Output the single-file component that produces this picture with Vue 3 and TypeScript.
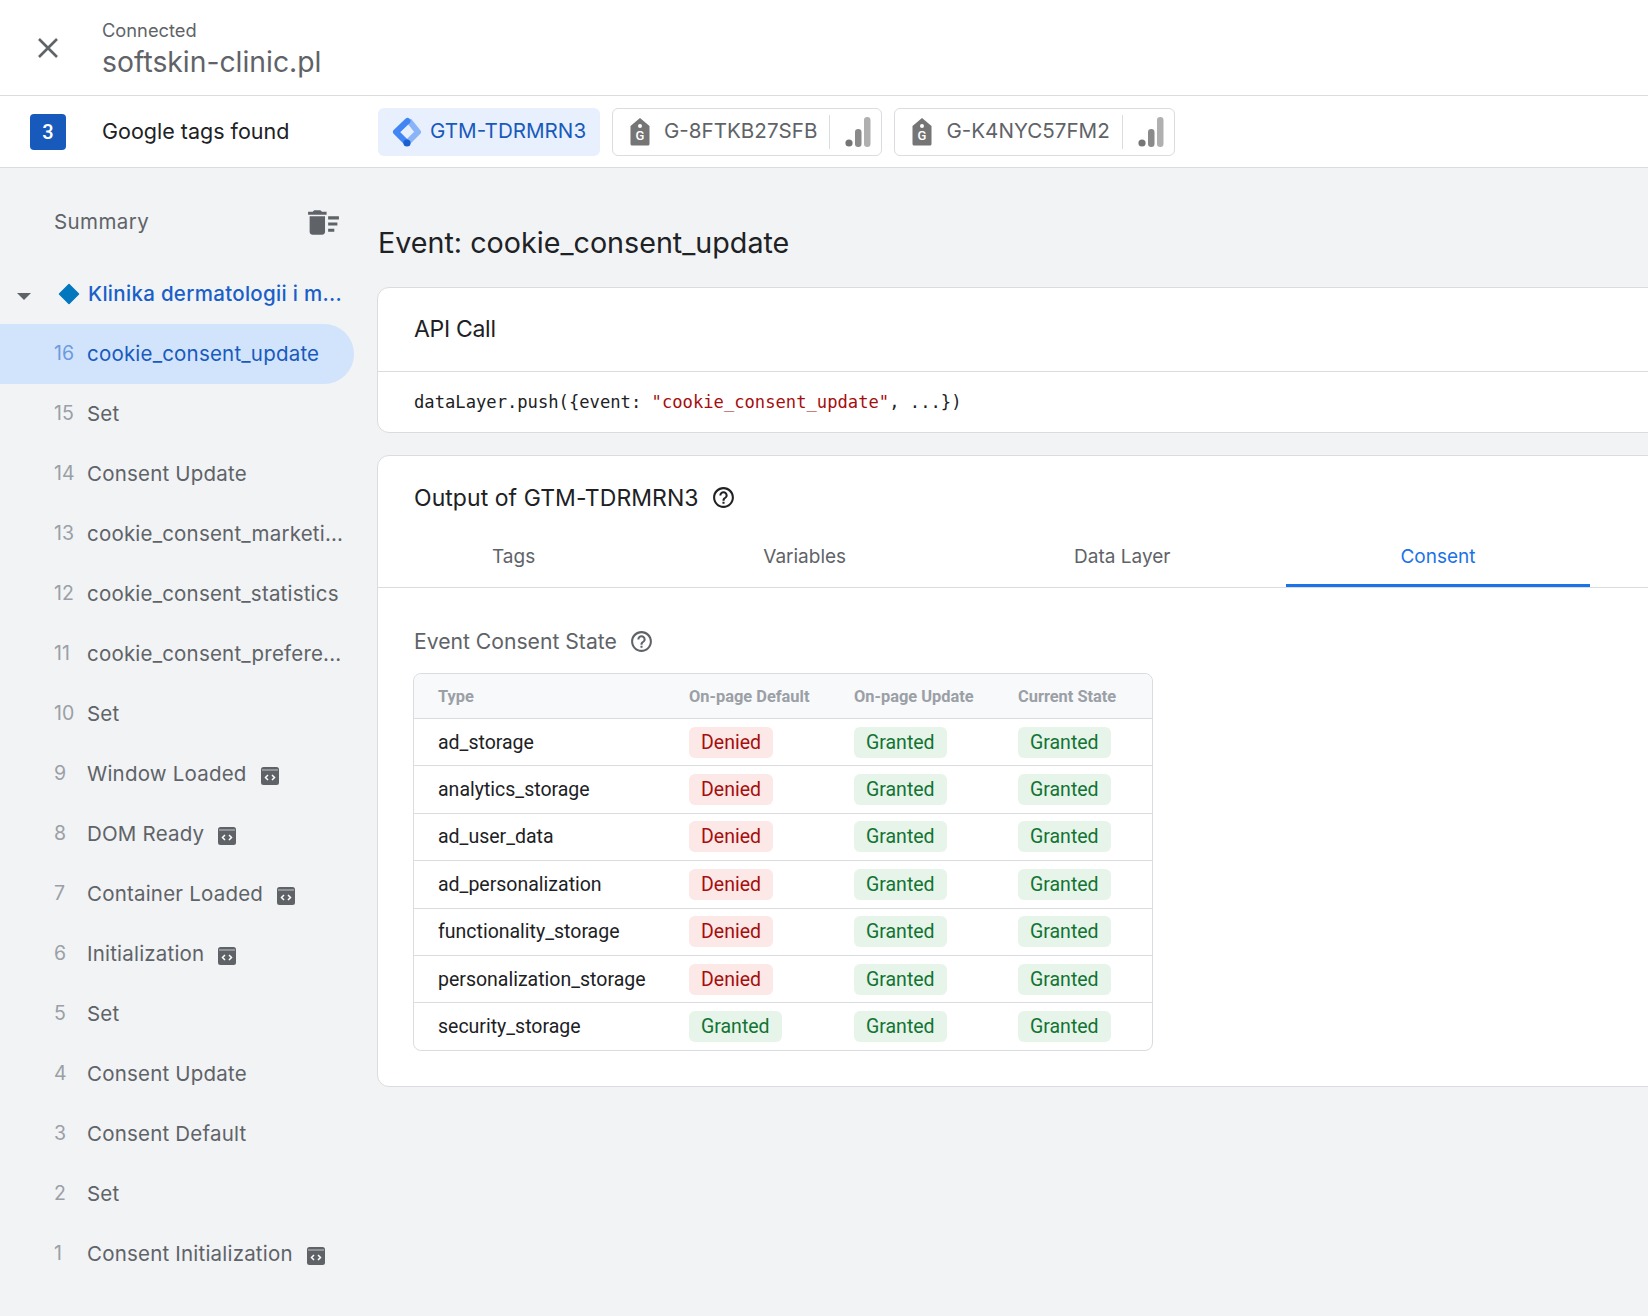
<script setup lang="ts">
interface EventRow {
  num: number;
  name: string;
  selected?: boolean;
  code?: boolean;
}

const events: EventRow[] = [
  { num: 16, name: "cookie_consent_update", selected: true },
  { num: 15, name: "Set" },
  { num: 14, name: "Consent Update" },
  { num: 13, name: "cookie_consent_marketi..." },
  { num: 12, name: "cookie_consent_statistics" },
  { num: 11, name: "cookie_consent_prefere..." },
  { num: 10, name: "Set" },
  { num: 9, name: "Window Loaded", code: true },
  { num: 8, name: "DOM Ready", code: true },
  { num: 7, name: "Container Loaded", code: true },
  { num: 6, name: "Initialization", code: true },
  { num: 5, name: "Set" },
  { num: 4, name: "Consent Update" },
  { num: 3, name: "Consent Default" },
  { num: 2, name: "Set" },
  { num: 1, name: "Consent Initialization", code: true },
];

const tags = ["G-8FTKB27SFB", "G-K4NYC57FM2"];
const tabs = ["Tags", "Variables", "Data Layer", "Consent"];

const consent = [
  { type: "ad_storage", def: "Denied" },
  { type: "analytics_storage", def: "Denied" },
  { type: "ad_user_data", def: "Denied" },
  { type: "ad_personalization", def: "Denied" },
  { type: "functionality_storage", def: "Denied" },
  { type: "personalization_storage", def: "Denied" },
  { type: "security_storage", def: "Granted" },
];

const helpPath =
  "M11 18h2v-2h-2v2zm1-16C6.48 2 2 6.48 2 12s4.48 10 10 10 10-4.48 10-10S17.52 2 12 2zm0 18c-4.41 0-8-3.59-8-8s3.59-8 8-8 8 3.59 8 8-3.59 8-8 8zm0-14c-2.21 0-4 1.79-4 4h2c0-1.1.9-2 2-2s2 .9 2 2c0 2-3 1.75-3 5h2c0-2.25 3-2.5 3-5 0-2.21-1.79-4-4-4z";
</script>

<template>
  <div class="page">
    <header class="top">
      <svg class="close" viewBox="0 0 22 22" width="22" height="22">
        <path d="M2 2l18 18M20 2L2 20" stroke="#5f6368" stroke-width="2.6" fill="none" />
      </svg>
      <div class="site">
        <div class="status">Connected</div>
        <div class="domain">softskin-clinic.pl</div>
      </div>
    </header>

    <div class="tagbar">
      <div class="count">3</div>
      <div class="found">Google tags found</div>
      <div class="chip chip-active">
        <svg viewBox="0 0 30 30" width="30" height="30">
          <path d="M18 5L26 15L16 25" stroke="#8ab4f8" stroke-width="6" fill="none" stroke-linecap="round" stroke-linejoin="round" />
          <path d="M15.5 4L4 15L14.5 25.5" stroke="#4285f4" stroke-width="6" fill="none" stroke-linecap="round" stroke-linejoin="round" />
          <circle cx="15" cy="26" r="3.6" fill="#1a5fd0" />
        </svg>
        <span class="chip-text">GTM-TDRMRN3</span>
      </div>
      <div v-for="t in tags" :key="t" class="chip chip-tag">
        <svg viewBox="0 0 20 28" width="20" height="28">
          <path d="M10 0L19.5 8V26a1.5 1.5 0 0 1-1.5 1.5H2A1.5 1.5 0 0 1 .5 26V8z" fill="#757575" />
          <circle cx="10" cy="8" r="2" fill="#fff" />
          <text x="10" y="22" text-anchor="middle" class="tag-g">G</text>
        </svg>
        <span class="chip-label">{{ t }}</span>
        <span class="chip-sep"></span>
        <svg viewBox="0 0 26 30" width="26" height="30">
          <circle cx="4" cy="26" r="3.6" fill="#757575" />
          <rect x="10" y="12" width="6.5" height="18" rx="3.2" fill="#8a8a8a" />
          <rect x="19" y="0" width="6.5" height="30" rx="3.2" fill="#b0b0b0" />
        </svg>
      </div>
    </div>

    <div class="body">
      <aside class="side">
        <div class="summary">
          <span>Summary</span>
          <svg viewBox="0 0 24 24" width="37" height="37">
            <path fill="#5f6368" d="M15 16h4v2h-4zm0-8h7v2h-7zm0 4h6v2h-6zM3 18c0 1.1.9 2 2 2h6c1.1 0 2-.9 2-2V8H3v10zM14 5h-3l-1-1H6L5 5H2v2h12z" />
          </svg>
        </div>
        <div class="container-row">
          <span class="caret"></span>
          <svg class="diamond" viewBox="0 0 22 22" width="22" height="22">
            <path d="M11 1.5L20.5 11L11 20.5L1.5 11z" fill="#0277bd" stroke="#0277bd" stroke-width="1.5" stroke-linejoin="round" />
          </svg>
          <span class="container-name">Klinika dermatologii i m...</span>
        </div>
        <div v-for="e in events" :key="e.num" class="ev" :class="{ 'ev-sel': e.selected }">
          <span class="ev-num">{{ e.num }}</span>
          <span class="ev-name">{{ e.name }}</span>
          <svg v-if="e.code" class="ev-code" viewBox="0 0 18 18" width="18" height="18">
            <rect x="0" y="0" width="18" height="18" rx="2.5" fill="#5f6368" />
            <path d="M1 3h16" stroke="#c4c6c9" stroke-width="1" />
            <path d="M7 8l-2.5 2.5L7 13M11 8l2.5 2.5L11 13" stroke="#fff" stroke-width="1.5" fill="none" />
          </svg>
        </div>
      </aside>

      <main class="main">
        <h1 class="title">Event: cookie_consent_update</h1>

        <section class="card">
          <div class="api-head">API Call</div>
          <div class="api-code">dataLayer.push({event: <span class="str">"cookie_consent_update"</span>, ...})</div>
        </section>

        <section class="card output">
          <div class="out-head">
            <span>Output of GTM-TDRMRN3</span>
            <svg viewBox="0 0 24 24" width="25" height="25"><path :d="helpPath" fill="#202124" /></svg>
          </div>
          <div class="tabs">
            <div v-for="t in tabs" :key="t" class="tab" :class="{ 'tab-on': t === 'Consent' }">{{ t }}</div>
          </div>
          <div class="state-head">
            <span>Event Consent State</span>
            <svg viewBox="0 0 24 24" width="25" height="25"><path :d="helpPath" fill="#5f6368" /></svg>
          </div>
          <table class="grid">
            <thead>
              <tr>
                <th class="c1">Type</th>
                <th class="c2">On-page Default</th>
                <th class="c3">On-page Update</th>
                <th class="c4">Current State</th>
              </tr>
            </thead>
            <tbody>
              <tr v-for="r in consent" :key="r.type">
                <td>{{ r.type }}</td>
                <td><span class="pill" :class="r.def === 'Denied' ? 'no' : 'yes'">{{ r.def }}</span></td>
                <td><span class="pill yes">Granted</span></td>
                <td><span class="pill yes">Granted</span></td>
              </tr>
            </tbody>
          </table>
        </section>
      </main>
    </div>
  </div>
</template>

<style>
html,
body {
  margin: 0;
  background: #f1f3f5;
  overflow: hidden;
}
</style>

<style scoped>
.page {
  width: 1648px;
  height: 1316px;
  overflow: hidden;
  display: flex;
  flex-direction: column;
  font-family: Inter, "Noto Sans", sans-serif;
  color: #5f6368;
  background: #f1f3f5;
}

.top {
  height: 96px;
  box-sizing: border-box;
  background: #fff;
  border-bottom: 1px solid #dadce0;
  display: flex;
  align-items: center;
  padding-left: 37px;
}
.site {
  margin-left: 43px;
  margin-top: 3px;
}
.status {
  font-size: 18.3px;
  line-height: 24px;
}
.domain {
  margin-top: 2px;
  font-size: 28.3px;
  line-height: 36px;
}

.tagbar {
  height: 72px;
  box-sizing: border-box;
  background: #fff;
  border-bottom: 1px solid #dadce0;
  display: flex;
  align-items: center;
  padding-left: 30px;
}
.count {
  width: 36px;
  height: 36px;
  border-radius: 4px;
  background: #185abc;
  color: #fff;
  font: 500 20px/36px Roboto, sans-serif;
  text-align: center;
}
.found {
  width: 276px;
  margin-left: 36px;
  padding-bottom: 2px;
  font-size: 21.5px;
  color: #202124;
}
.chip {
  height: 48px;
  box-sizing: border-box;
  border-radius: 6px;
  display: flex;
  align-items: center;
  margin-right: 12px;
  font-size: 20.6px;
}
.chip-active {
  width: 222px;
  background: #e8f0fe;
  padding-left: 14px;
  color: #185abc;
}
.chip-text {
  margin-left: 8px;
  padding-bottom: 2px;
}
.chip-tag {
  border: 1px solid #dadce0;
  padding: 0 10px 0 17px;
}
.chip-label {
  margin-left: 14px;
  padding-bottom: 2px;
  white-space: nowrap;
}
.chip-sep {
  width: 1px;
  height: 34px;
  background: #dadce0;
  margin: 0 15px 0 12px;
}
.tag-g {
  font: 500 13px Roboto, sans-serif;
  fill: #fff;
}

.body {
  flex: 1;
  display: flex;
  min-height: 0;
}

.side {
  width: 354px;
  flex: none;
  padding-top: 24px;
  box-sizing: border-box;
}
.summary {
  height: 60px;
  box-sizing: border-box;
  margin-bottom: 12px;
  padding: 0 12px 0 54px;
  display: flex;
  align-items: center;
  justify-content: space-between;
  font-size: 20.5px;
  letter-spacing: 0.4px;
}
.summary span {
  padding-bottom: 2px;
}
.container-row {
  height: 60px;
  box-sizing: border-box;
  display: flex;
  align-items: center;
  padding-left: 17px;
  font-weight: 500;
  font-size: 20.5px;
  letter-spacing: 0.3px;
  color: #1a5fc9;
}
.caret {
  width: 0;
  height: 0;
  border-left: 7px solid transparent;
  border-right: 7px solid transparent;
  border-top: 7px solid #5f6368;
  margin-top: 4px;
}
.diamond {
  margin-left: 27px;
  flex: none;
}
.container-name {
  margin-left: 8px;
  padding-bottom: 2px;
  white-space: nowrap;
}
.ev {
  height: 60px;
  box-sizing: border-box;
  padding: 0 0 2px 54px;
  display: flex;
  align-items: center;
  font-size: 20.5px;
  letter-spacing: 0.2px;
}
.ev-sel {
  background: #d2e3fc;
  border-radius: 0 30px 30px 0;
  color: #185abc;
}
.ev-num {
  width: 33px;
  flex: none;
  color: #9aa0a6;
  font-size: 19.5px;
  letter-spacing: 0;
}
.ev-sel .ev-num {
  color: #6c9be0;
}
.ev-name {
  white-space: nowrap;
}
.ev-code {
  margin-left: 14px;
  margin-top: 5px;
  flex: none;
}

.main {
  flex: 1;
  min-width: 0;
  overflow: hidden;
  padding-left: 23px;
}
.title {
  margin: 0;
  height: 119px;
  box-sizing: border-box;
  padding: 56px 0 0 1px;
  font-size: 28.7px;
  line-height: 38px;
  font-weight: 400;
  color: #202124;
}
.card {
  width: 1400px;
  box-sizing: border-box;
  background: #fff;
  border: 1px solid #dadce0;
  border-radius: 12px;
}
.api-head {
  height: 84px;
  box-sizing: border-box;
  padding-left: 36px;
  border-bottom: 1px solid #dadce0;
  font-size: 23px;
  line-height: 82px;
  color: #202124;
  letter-spacing: -0.3px;
}
.api-code {
  height: 60px;
  padding-left: 36px;
  font: 17.17px/60px "DejaVu Sans Mono", monospace;
  color: #202124;
}
.str {
  color: #a50e0e;
}
.output {
  margin-top: 22px;
  height: 632px;
}
.out-head {
  height: 84px;
  box-sizing: border-box;
  padding: 0 0 1px 36px;
  display: flex;
  align-items: center;
  gap: 12px;
  font-size: 23px;
  letter-spacing: 0.05px;
  color: #202124;
}
.tabs {
  height: 47px;
  display: flex;
  border-bottom: 1px solid #dadce0;
}
.tab {
  padding: 0 114px;
  font-size: 19px;
  line-height: 34px;
  box-sizing: border-box;
  height: 47px;
}
.tab-on {
  margin-left: 2px;
  color: #1a73e8;
  border-bottom: 3px solid #1a73e8;
}
.state-head {
  height: 85px;
  padding: 22px 0 0 36px;
  box-sizing: border-box;
  display: flex;
  align-items: center;
  gap: 12px;
  font-size: 21.15px;
}
.grid {
  margin-left: 35px;
  width: 740px;
  border-collapse: separate;
  border-spacing: 0;
  border: 1px solid #dadce0;
  border-radius: 8px;
  table-layout: fixed;
  font: 400 19.5px Roboto, sans-serif;
  color: #202124;
}
.grid th {
  height: 44px;
  padding: 0;
  text-align: left;
  background: #f8f9fa;
  font-weight: 700;
  font-size: 16.4px;
  color: #9aa0a6;
  border-bottom: 1px solid #dadce0;
}
.grid th:first-child {
  border-top-left-radius: 8px;
}
.grid th:last-child {
  border-top-right-radius: 8px;
}
.c1 {
  width: 251px;
}
.c2 {
  width: 165px;
}
.c3 {
  width: 164px;
}
.grid th:first-child,
.grid td:first-child {
  padding-left: 24px;
}
.grid td {
  height: 46.4px;
  padding: 0;
  border-bottom: 1px solid #dadce0;
}
.grid tr:last-child td {
  border-bottom: 0;
}
.pill {
  display: inline-block;
  padding: 0 12px;
  height: 31px;
  line-height: 31px;
  border-radius: 6px;
  vertical-align: middle;
}
.no {
  background: #fce8e6;
  color: #a50e0e;
}
.yes {
  background: #e6f4ea;
  color: #137333;
}
</style>
